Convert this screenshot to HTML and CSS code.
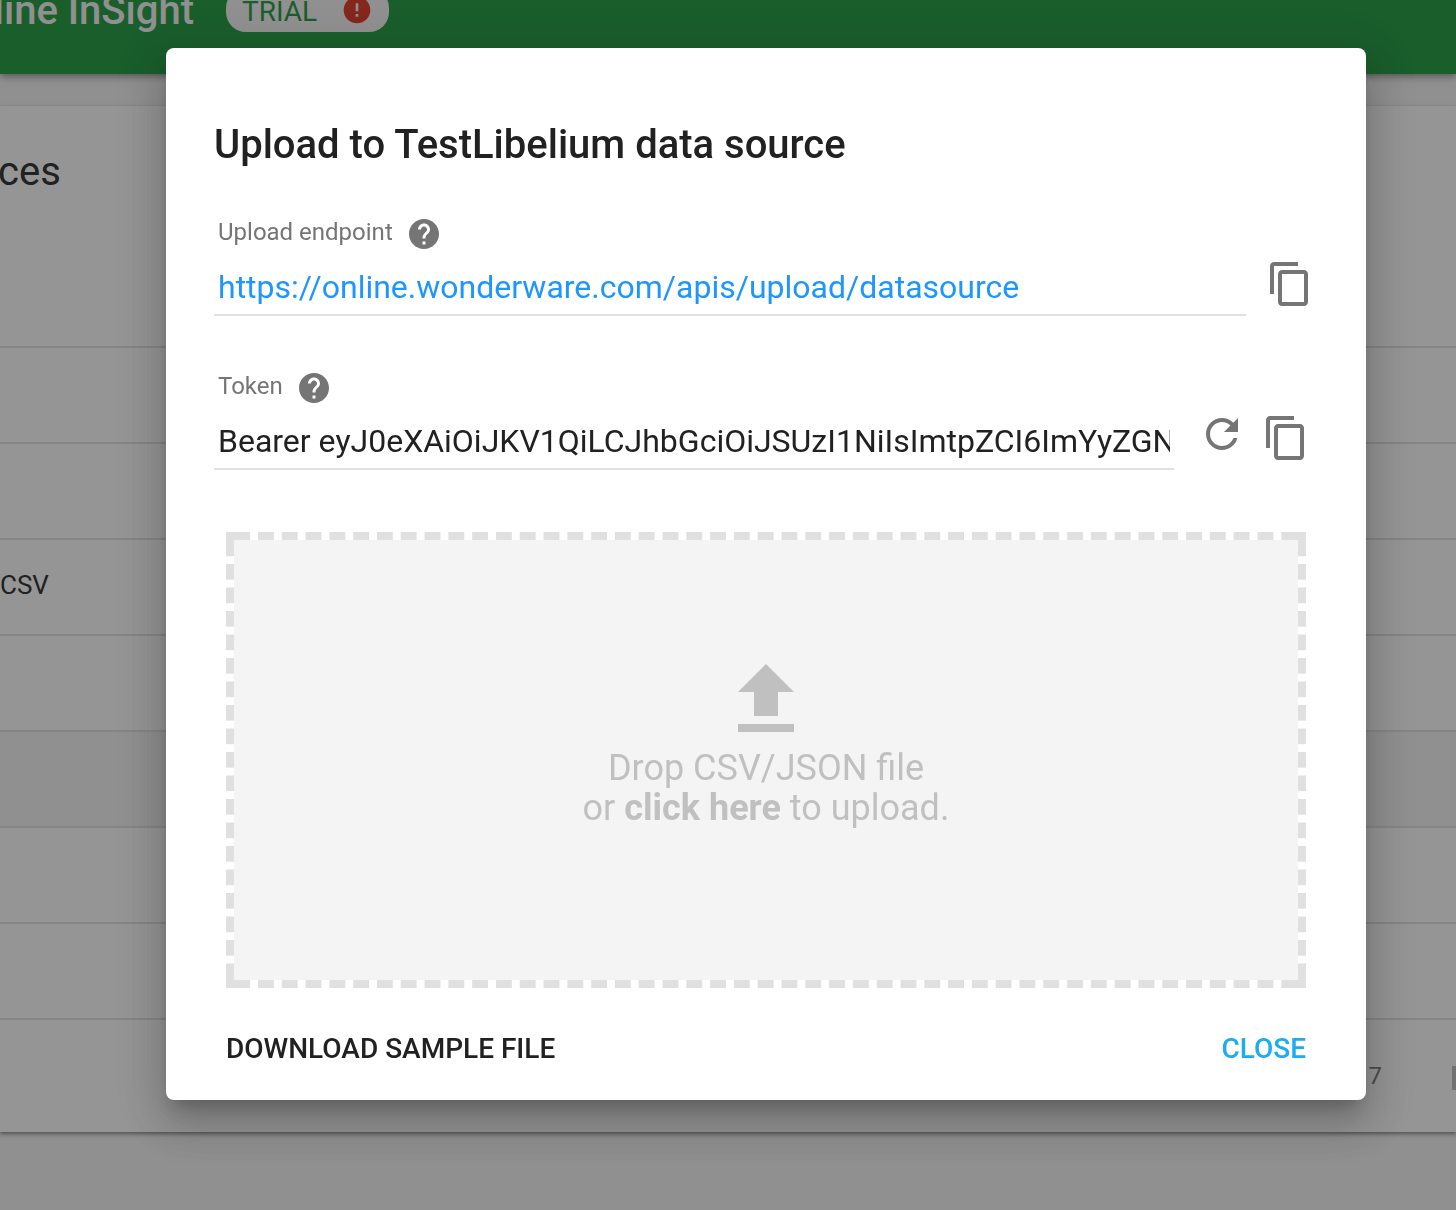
FILE: index.html
```html
<!DOCTYPE html>
<html lang="en">
<head>
<meta charset="utf-8">
<meta name="viewport" content="width=device-width, initial-scale=1">
<title>Upload to TestLibelium data source</title>
<link rel="stylesheet" href="styles.css">
</head>
<body>
<div class="page" inert>
  <header class="toolbar">
    <span class="brand">line InSight</span>
    <span class="trial">TRIAL
      <svg class="trial-icon" viewBox="0 0 24 24" aria-hidden="true"><path d="M12 2C6.480 2 2 6.480 2 12s4.480 10 10 10 10-4.480 10-10S17.520 2 12 2zm1 15h-2v-2h2v2zm0-4h-2V7h2v6z"/></svg>
    </span>
  </header>
  <main class="card">
    <h1 class="card-title">ces</h1>
    <ul class="rows">
      <li class="row"></li>
      <li class="row"></li>
      <li class="row">CSV</li>
      <li class="row"></li>
      <li class="row row-hover"></li>
      <li class="row"></li>
      <li class="row"></li>
    </ul>
    <div class="pager"><span>7</span><span class="first-page"></span></div>
  </main>
</div>
<div class="backdrop">
  <section class="dialog" role="dialog" aria-modal="true" aria-labelledby="dialog-title">
    <h2 class="dialog-title" id="dialog-title">Upload to TestLibelium data source</h2>
    <div class="fields">
      <div class="field">
        <div class="field-head">
          <label for="endpoint">Upload endpoint</label>
          <button class="help" type="button" aria-label="About the upload endpoint"><svg viewBox="0 0 24 24"><path d="M12 2C6.480 2 2 6.480 2 12s4.480 10 10 10 10-4.480 10-10S17.520 2 12 2zm1 17h-2v-2h2v2zm2.070-7.750l-.9.920C13.450 12.900 13 13.500 13 15h-2v-.5c0-1.100.450-2.100 1.170-2.830l1.240-1.260c.370-.360.590-.860.590-1.410 0-1.100-.9-2-2-2s-2 .9-2 2H8c0-2.210 1.790-4 4-4s4 1.790 4 4c0 .880-.360 1.680-.930 2.250z"/></svg></button>
        </div>
        <div class="field-row">
          <input class="value value-url" id="endpoint" type="text" readonly value="https://online.wonderware.com/apis/upload/datasource">
          <button class="action copy" type="button" aria-label="Copy endpoint"><svg viewBox="0 0 24 24"><path d="M16 1H4c-1.100 0-2 .9-2 2v14h2V3h12V1zm3 4H8c-1.100 0-2 .9-2 2v14c0 1.100.9 2 2 2h11c1.100 0 2-.9 2-2V7c0-1.100-.9-2-2-2zm0 16H8V7h11v14z"/></svg></button>
        </div>
      </div>
      <div class="field">
        <div class="field-head">
          <label for="token">Token</label>
          <button class="help" type="button" aria-label="About the token"><svg viewBox="0 0 24 24"><path d="M12 2C6.480 2 2 6.480 2 12s4.480 10 10 10 10-4.480 10-10S17.520 2 12 2zm1 17h-2v-2h2v2zm2.070-7.750l-.9.920C13.450 12.900 13 13.500 13 15h-2v-.5c0-1.100.450-2.100 1.170-2.830l1.240-1.260c.370-.360.590-.860.590-1.410 0-1.100-.9-2-2-2s-2 .9-2 2H8c0-2.210 1.790-4 4-4s4 1.790 4 4c0 .880-.360 1.680-.930 2.250z"/></svg></button>
        </div>
        <div class="field-row field-row-token">
          <input class="value" id="token" type="text" readonly value="Bearer eyJ0eXAiOiJKV1QiLCJhbGciOiJSUzI1NiIsImtpZCI6ImYyZGN">
          <button class="action refresh" type="button" aria-label="Refresh token"><svg viewBox="0 0 24 24"><path d="M17.650 6.350C16.200 4.900 14.210 4 12 4c-4.420 0-7.990 3.580-7.990 8s3.570 8 7.990 8c3.730 0 6.840-2.550 7.730-6h-2.080c-.820 2.330-3.040 4-5.650 4-3.310 0-6-2.690-6-6s2.690-6 6-6c1.660 0 3.140.690 4.220 1.780L13 11h7V4l-2.350 2.350z"/></svg></button>
          <button class="action copy" type="button" aria-label="Copy token"><svg viewBox="0 0 24 24"><path d="M16 1H4c-1.100 0-2 .9-2 2v14h2V3h12V1zm3 4H8c-1.100 0-2 .9-2 2v14c0 1.100.9 2 2 2h11c1.100 0 2-.9 2-2V7c0-1.100-.9-2-2-2zm0 16H8V7h11v14z"/></svg></button>
        </div>
      </div>
    </div>
    <button class="dropzone" type="button">
      <svg class="upload-icon" viewBox="0 0 24 24" aria-hidden="true"><path d="M9 16h6v-6h4l-7-7-7 7h4zm-4 2h14v2H5z"/></svg>
      <span>Drop CSV/JSON file</span>
      <span>or <strong>click here</strong> to upload.</span>
    </button>
    <footer class="dialog-actions">
      <button class="text-button" type="button">DOWNLOAD SAMPLE FILE</button>
      <button class="text-button text-button-primary" type="button">CLOSE</button>
    </footer>
  </section>
</div>
</body>
</html>
```
FILE: styles.css
```css
* { box-sizing: border-box; }

body {
  margin: 0;
  background: #f5f5f5;
  color: #212121;
  font-family: Roboto, "Liberation Sans", sans-serif;
  overflow: hidden;
}

button {
  padding: 0;
  border: 0;
  background: none;
  color: inherit;
  font: inherit;
  cursor: pointer;
}

svg { display: block; fill: currentColor; }

/* Page behind the dialog, scrolled a little right and down */
.page { min-height: 100vh; }

.toolbar {
  display: flex;
  align-items: center;
  gap: 32px;
  height: 128px;
  margin-top: -54px;
  background: #159636;
  color: #f5f5f5;
  box-shadow: 0 2px 8px rgba(0, 0, 0, .5);
}

.brand {
  display: flex;
  justify-content: flex-end;
  width: 194px;
  font-size: 40px;
  font-weight: 500;
  white-space: nowrap;
}

.trial {
  display: flex;
  align-items: center;
  gap: 24px;
  height: 44px;
  padding: 2px 16px 0;
  border-radius: 20px;
  background: #f5f5f5;
  color: #159636;
  font-size: 28px;
}

.trial-icon { width: 32px; height: 32px; margin-bottom: 2px; color: #df2c19; }

.card {
  margin-top: 32px;
  background: #fff;
  box-shadow: 0 2px 4px rgba(0, 0, 0, .5);
}

.card-title {
  height: 240px;
  margin: 0 0 0 -2px;
  padding-top: 42px;
  font-size: 40px;
  font-weight: 400;
  line-height: 48px;
}

.rows { margin: 0; padding: 0; list-style: none; }

.row {
  height: 96px;
  border-top: 2px solid #e0e0e0;
  font-size: 26px;
  line-height: 90px;
}

.row-hover { background: #f5f5f5; }

.pager {
  display: flex;
  align-items: center;
  justify-content: flex-end;
  gap: 70px;
  height: 114px;
  border-top: 2px solid #e0e0e0;
  color: #757575;
  font-size: 24px;
}

.first-page { width: 4px; height: 24px; margin-top: 4px; background: #bdbdbd; }

/* Dialog */
.backdrop {
  position: fixed;
  inset: 0;
  display: flex;
  align-items: flex-start;
  padding: 48px 90px 48px 166px;
  background: rgba(33, 33, 33, .48);
}

.dialog {
  flex: 1;
  min-width: 0;
  padding-top: 73px;
  border-radius: 8px;
  background: #fff;
  box-shadow:
    0 14px 16px -8px rgba(0, 0, 0, .2),
    0 26px 38px 4px rgba(0, 0, 0, .14),
    0 10px 48px 8px rgba(0, 0, 0, .12);
}

.dialog-title {
  margin: 0 48px;
  font-size: 40px;
  font-weight: 500;
  line-height: 48px;
}

.fields {
  display: flex;
  flex-direction: column;
  gap: 54px;
  padding: 47px 48px 62px;
}

.field-head {
  display: flex;
  align-items: center;
  gap: 13px;
  height: 36px;
  padding-left: 4px;
  color: #757575;
  font-size: 24px;
}

.field-head label { line-height: 32px; padding-bottom: 4px; }
.help svg { width: 36px; height: 36px; }

.field-row { display: flex; align-items: flex-start; height: 64px; }
.field-row-token { padding-right: 4px; }

.value {
  flex: 1;
  min-width: 0;
  height: 56px;
  margin: 8px 16px 0 0;
  padding: 0 4px;
  border: 0;
  border-bottom: 2px solid #e0e0e0;
  outline: 0;
  background: none;
  color: #212121;
  font: 32px Roboto, "Liberation Sans", sans-serif;
}

.value-url { color: #1e96ff; }

.action {
  display: flex;
  align-items: center;
  justify-content: center;
  width: 56px;
  color: #757575;
}

.action svg { width: 48px; height: 48px; }
.copy { height: 64px; }
.refresh { height: 56px; margin-right: 8px; margin-left: 4px; }

/* The fill covers the padding box; dashes and corners show in the border area */
.dropzone {
  --dash: #e0e0e0;
  --dash-x: linear-gradient(90deg, var(--dash) 16px, transparent 0);
  --dash-y: linear-gradient(var(--dash) 16px, transparent 0);
  --corner: linear-gradient(var(--dash), var(--dash));
  display: flex;
  flex-direction: column;
  align-items: center;
  width: calc(100% - 120px);
  height: 456px;
  margin: 0 60px;
  padding-top: 112px;
  border: 8px solid transparent;
  background:
    linear-gradient(#f4f4f4, #f4f4f4) padding-box,
    var(--corner) 0 0 / 10px 10px no-repeat border-box,
    var(--corner) 100% 0 / 10px 10px no-repeat border-box,
    var(--corner) 0 100% / 10px 10px no-repeat border-box,
    var(--corner) 100% 100% / 10px 10px no-repeat border-box,
    var(--dash-x) 32px 0 / calc((100% - 80px) / 42) 8px repeat-x border-box,
    var(--dash-x) 32px 100% / calc((100% - 80px) / 42) 8px repeat-x border-box,
    var(--dash-y) 0 32px / 8px calc((100% - 80px) / 16) repeat-y border-box,
    var(--dash-y) 100% 32px / 8px calc((100% - 80px) / 16) repeat-y border-box;
  color: #c0c0c0;
  font-size: 36px;
  line-height: 40px;
}

.upload-icon { width: 96px; height: 96px; }
.dropzone strong { font-weight: 700; }

.dialog-actions {
  display: flex;
  justify-content: space-between;
  padding: 24px 60px 16px;
}

.text-button { height: 72px; font-size: 28px; font-weight: 500; }
.text-button-primary { color: #1dabf2; }
```
